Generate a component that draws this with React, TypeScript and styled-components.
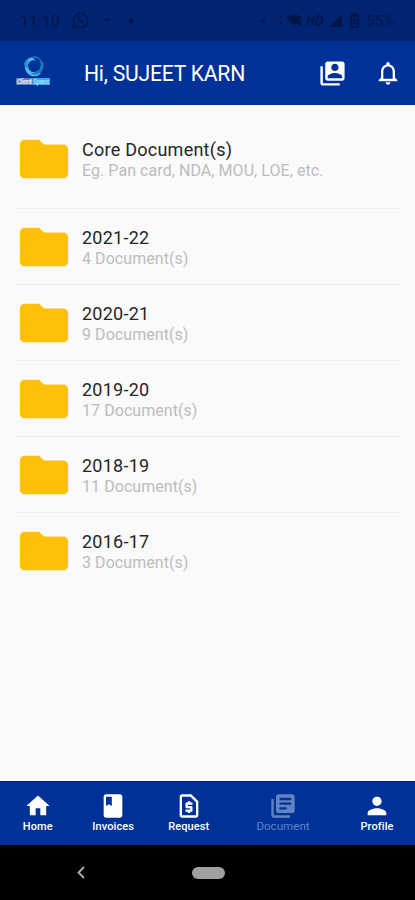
import React from 'react';
import styled, { createGlobalStyle } from 'styled-components';
import {
  MdBook,
  MdFolder,
  MdHome,
  MdLibraryBooks,
  MdNotificationsNone,
  MdOutlineRequestPage,
  MdPerson,
  MdSwitchAccount,
} from 'react-icons/md';

const GlobalStyle = createGlobalStyle`
  * { box-sizing: border-box; }
  body { margin: 0; background: #fafafa; font-family: Roboto, sans-serif; }
`;

const Screen = styled.div`
  width: 415px;
  height: 900px;
  display: flex;
  flex-direction: column;
  background: #fafafa;
  overflow: hidden;
`;

const StatusBar = styled.div`
  height: 41px;
  flex: none;
  display: flex;
  align-items: center;
  padding: 1px 20px 0 20px;
  background: #002472;
  color: #00164a;
`;

const Clock = styled.span`
  width: 52px;
  font-size: 16px;
`;

const StatusIcons = styled.svg`
  display: block;
  flex: none;
`;

const Battery = styled.span`
  margin-left: 4px;
  font-size: 15px;
  letter-spacing: 0.3px;
`;

const Spacer = styled.div`
  flex: 1;
`;

const AppBar = styled.header`
  height: 64px;
  flex: none;
  display: flex;
  align-items: center;
  padding: 0 13px 0 15px;
  background: #003199;
  color: #fff;
`;

const Logo = styled.svg`
  display: block;
  width: 36px;
  height: 34px;
  margin-right: 33px;
  margin-top: -5px;
`;

const Title = styled.h1`
  flex: 1;
  margin: 0;
  padding-top: 2px;
  font-size: 21.2px;
  letter-spacing: -0.25px;
  line-height: 26px;
  font-weight: 400;
  white-space: nowrap;
`;

const BarButton = styled.button`
  display: flex;
  padding: 0;
  margin-left: 27px;
  border: 0;
  background: none;
  color: inherit;
  svg { display: block; }
`;

const FolderList = styled.main`
  flex: 1;
  padding: 14px 15px 0;
`;

const FolderRow = styled.div<{ $tall?: boolean }>`
  height: ${(p) => (p.$tall ? '90px' : '76.1px')};
  padding-top: ${(p) => (p.$tall ? '11px' : '8.5px')};
  display: flex;
  align-items: flex-start;
  border-bottom: 1px solid #eeeeee;
  &:last-child { border-bottom-color: transparent; }
`;

const FolderIcon = styled(MdFolder)`
  display: block;
  flex: none;
  width: 58px;
  height: 58px;
  color: #ffc107;
`;

const FolderText = styled.div`
  padding: 10px 0 0 9px;
`;

const FolderName = styled.div`
  font-size: 18px;
  line-height: 20px;
  letter-spacing: 0.25px;
  color: #262626;
`;

const FolderDetail = styled.div`
  font-size: 16px;
  line-height: 21px;
  letter-spacing: 0.06px;
  color: #bcbcbc;
`;

const BottomNav = styled.nav`
  height: 64px;
  flex: none;
  display: grid;
  grid-template-columns: 75.5px 75.5px 75.5px 113px 75px;
  background: #003199;
  border-top: 1px solid #001f85;
`;

const NavItem = styled.div<{ $dim?: boolean }>`
  display: flex;
  flex-direction: column;
  align-items: center;
  padding-top: 10px;
  color: ${(p) => (p.$dim ? '#6283c4' : '#fff')};
  svg { display: block; }
`;

const NavLabel = styled.span<{ $dim?: boolean }>`
  font-size: ${(p) => (p.$dim ? '11.6px' : '11px')};
  line-height: 13px;
  font-weight: ${(p) => (p.$dim ? 400 : 500)};
  letter-spacing: ${(p) => (p.$dim ? '0' : '0.1px')};
`;

const SystemNav = styled.div`
  height: 55px;
  flex: none;
  display: grid;
  grid-template-columns: 161px 94px 1fr;
  align-items: center;
  justify-items: center;
  background: #000;
`;

const HomePill = styled.div`
  width: 33px;
  height: 12px;
  border-radius: 6px;
  background: #a0a0a0;
`;

const folders = [
  { name: 'Core Document(s)', detail: 'Eg. Pan card, NDA, MOU, LOE, etc.', tall: true },
  { name: '2021-22', detail: '4 Document(s)' },
  { name: '2020-21', detail: '9 Document(s)' },
  { name: '2019-20', detail: '17 Document(s)' },
  { name: '2018-19', detail: '11 Document(s)' },
  { name: '2016-17', detail: '3 Document(s)' },
];

const tabs = [
  { label: 'Home', Icon: MdHome },
  { label: 'Invoices', Icon: MdBook },
  { label: 'Request', Icon: MdOutlineRequestPage },
  { label: 'Document', Icon: MdLibraryBooks, dim: true },
  { label: 'Profile', Icon: MdPerson },
];

export default function App() {
  return (
    <Screen>
      <GlobalStyle />
      <StatusBar>
        <Clock>11:10</Clock>
        <StatusIcons width="64" height="18" viewBox="0 0 64 18" fill="none" stroke="currentColor" strokeWidth="1.6">
          <path d="M1.3 15.7l1-4A7 7 0 1 1 5 14.6z" />
          <path d="M5.8 5.3c-.8 2.3 3.3 6.4 5.8 5.5l.5-1.5-2-.9-.8.7-1.8-1.9.7-.9-.8-1.7z" fill="currentColor" strokeWidth=".5" />
          <path d="M30 6.5h8l-2 2.5h-3z" fill="currentColor" stroke="none" />
          <circle cx="59" cy="9" r="2.4" fill="currentColor" stroke="none" />
        </StatusIcons>
        <Spacer />
        <StatusIcons width="104" height="18" viewBox="0 0 104 18" fill="currentColor">
          <circle cx="5" cy="9" r="2.2" />
          <path d="M21 6l2-3 2 3zM21 10h4l-2 3z" />
          <path d="M28 5.5q8-6 16 0L36 14zM40 9h3v5h-3z" />
          <path d="M51 4l-2 9M56 4l-2 9M50 8.5h5M60 4l-2 9h2q3 0 4-4.5t-3-4.500z" fill="none" stroke="currentColor" strokeWidth="1.8" />
          <path d="M71 15L84 2v13z" />
          <path d="M94 4V2.500h5V4M93 4h7v11h-7zM95 7l3 5M98 7l-3 5" fill="none" stroke="currentColor" strokeWidth="1.9" />
        </StatusIcons>
        <Battery>55%</Battery>
      </StatusBar>
      <AppBar>
        <Logo viewBox="0 0 36 34">
          <path d="M26 6A9.500 9.500 0 1 0 26 19.500L22.500 17A6 6 0 1 1 21 6.500Q18 3 15 4Q21 0 26 6z" fill="#55b9ee" />
          <path d="M21 4q7 3 4 10q-3 6-10 5q6 4 11-1q5-7 0-12z" fill="#167fb8" />
          <path d="M9 10q2-6 7-7q-5 5-2 12q-4-1-5-5z" fill="#2494d4" />
          <rect x="1" y="24" width="17" height="7" fill="#647db2" />
          <rect x="18" y="24" width="17" height="7" fill="#35a9ec" />
          <text x="2" y="30" fontSize="6.500" fontWeight="700" fontFamily="Roboto" fill="#e4edf7" textLength="15">Client</text>
          <text x="18" y="30" fontSize="6.500" fontWeight="700" fontFamily="Roboto" fill="#a4ddff" textLength="16">Space</text>
        </Logo>
        <Title>Hi, SUJEET KARN</Title>
        <BarButton aria-label="Switch account"><MdSwitchAccount size={29} /></BarButton>
        <BarButton aria-label="Notifications"><MdNotificationsNone size={28} /></BarButton>
      </AppBar>
      <FolderList>
        {folders.map((f) => (
          <FolderRow key={f.name} $tall={f.tall}>
            <FolderIcon />
            <FolderText>
              <FolderName>{f.name}</FolderName>
              <FolderDetail>{f.detail}</FolderDetail>
            </FolderText>
          </FolderRow>
        ))}
      </FolderList>
      <BottomNav>
        {tabs.map(({ label, Icon, dim }) => (
          <NavItem key={label} $dim={dim}>
            <Icon size={28} />
            <NavLabel $dim={dim}>{label}</NavLabel>
          </NavItem>
        ))}
      </BottomNav>
      <SystemNav>
        <svg width="8" height="13" viewBox="0 0 8 13" fill="none" stroke="#b0b0b0" strokeWidth="1.8">
          <path d="M7 1L1.500 6.500L7 12" />
        </svg>
        <HomePill />
      </SystemNav>
    </Screen>
  );
}
